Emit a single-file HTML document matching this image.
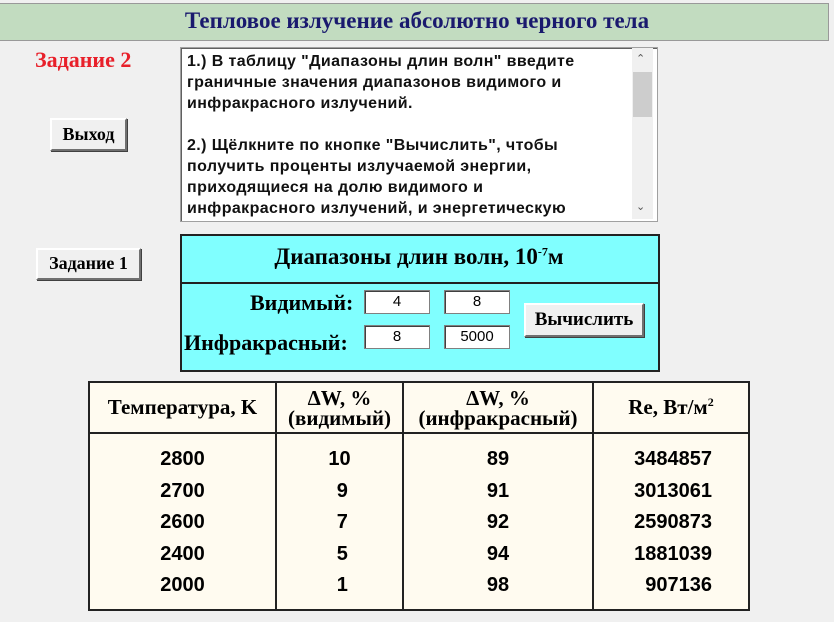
<!DOCTYPE html>
<html><head><meta charset="utf-8"><style>
body{margin:0;width:834px;height:622px;background:#f0f0f0;position:relative;overflow:hidden;font-family:"Liberation Sans",sans-serif}
.a{position:absolute}
.serif{font-family:"Liberation Serif",serif;font-weight:bold}
.btn{position:absolute;background:#f0f0f0;border:2px solid;border-color:#fff #707070 #707070 #fff;box-shadow:1px 1px 0 #404040;font-family:"Liberation Serif",serif;font-weight:bold;font-size:18px;text-align:center;box-sizing:border-box;white-space:nowrap}
.inp{position:absolute;background:#fff;border:1px solid #808080;box-shadow:inset 1px 1px 0 #404040;width:66px;height:24px;box-sizing:border-box;text-align:center;font-size:15px;line-height:22px}
table{border-collapse:collapse}
td{border:2px solid #222;text-align:center;padding:0}
.num{font-size:20px;font-weight:bold;line-height:31.5px;vertical-align:top;padding-top:10px}
</style></head><body>
<div class="a" style="left:0;top:3px;width:828px;height:36px;background:#c2dcc0;border:1px solid #999;border-left:none"></div>
<div class="a serif" style="left:0;top:8px;width:834px;text-align:center;font-size:23px;color:#1a1a6e">Тепловое излучение абсолютно черного тела</div>
<div class="a serif" style="left:35px;top:47px;font-size:22px;color:#e8202a">Задание 2</div>
<div class="a" style="left:180px;top:47px;width:476px;height:173px;background:#fff;border:1px solid #a0a0a0;box-shadow:inset 1px 1px 0 #606060"></div>
<div class="a" style="left:187px;top:51px;width:425px;font-size:16px;letter-spacing:0.4px;font-weight:bold;line-height:21px;color:#111">1.) В таблицу "Диапазоны длин волн" введите граничные значения диапазонов видимого и инфракрасного излучений.<br><br>2.) Щёлкните по кнопке "Вычислить", чтобы получить проценты излучаемой энергии, приходящиеся на долю видимого и инфракрасного излучений, и энергетическую</div>
<div class="a" style="left:632px;top:48px;width:21px;height:171px;background:#f0f0f0"></div>
<div class="a" style="left:633px;top:72px;width:19px;height:45px;background:#cdcdcd"></div>
<div class="a" style="left:636px;top:52px;font-size:11px;color:#555">&#8963;</div>
<div class="a" style="left:636px;top:200px;font-size:11px;color:#555">&#8964;</div>
<div class="btn" style="left:50px;top:118px;width:77px;height:33px;line-height:28px">Выход</div>
<div class="btn" style="left:36px;top:248px;width:105px;height:32px;line-height:27px">Задание 1</div>
<div class="a" style="left:180px;top:234px;width:476px;height:134px;background:#80ffff;border:2px solid #222"></div>
<div class="a" style="left:180px;top:282px;width:478px;height:2px;background:#222"></div>
<div class="a serif" style="left:180px;top:244px;width:478px;text-align:center;font-size:23px">Диапазоны длин волн, 10<sup style="font-size:12px">-7</sup>м</div>
<div class="a serif" style="left:250px;top:290px;font-size:22px">Видимый:</div>
<div class="a serif" style="left:184px;top:330px;font-size:22px">Инфракрасный:</div>
<div class="inp" style="left:364px;top:290px">4</div>
<div class="inp" style="left:444px;top:290px">8</div>
<div class="inp" style="left:364px;top:325px">8</div>
<div class="inp" style="left:444px;top:325px">5000</div>
<div class="btn" style="left:524px;top:303px;width:120px;height:34px;line-height:29px;font-size:19px">Вычислить</div>
<table class="a" style="left:88px;top:381px;width:662px;height:230px;background:#fffbf0">
<tr style="height:51px"><td style="width:185px;font-size:21px" class="serif">Температура, K</td><td style="width:125px;font-size:21px;line-height:20px" class="serif">ΔW, %<br>(видимый)</td><td style="width:188px;font-size:21px;line-height:20px" class="serif">ΔW, %<br>(инфракрасный)</td><td class="serif" style="font-size:21px">Re, Вт/м<sup style="font-size:12px">2</sup></td></tr>
<tr><td class="num">2800<br>2700<br>2600<br>2400<br>2000</td>
<td class="num">10<br>&nbsp;9<br>&nbsp;7<br>&nbsp;5<br>&nbsp;1</td>
<td class="num">89<br>91<br>92<br>94<br>98</td>
<td class="num" style="text-align:right;padding-right:36px">3484857<br>3013061<br>2590873<br>1881039<br>907136</td></tr>
</table>
</body></html>
